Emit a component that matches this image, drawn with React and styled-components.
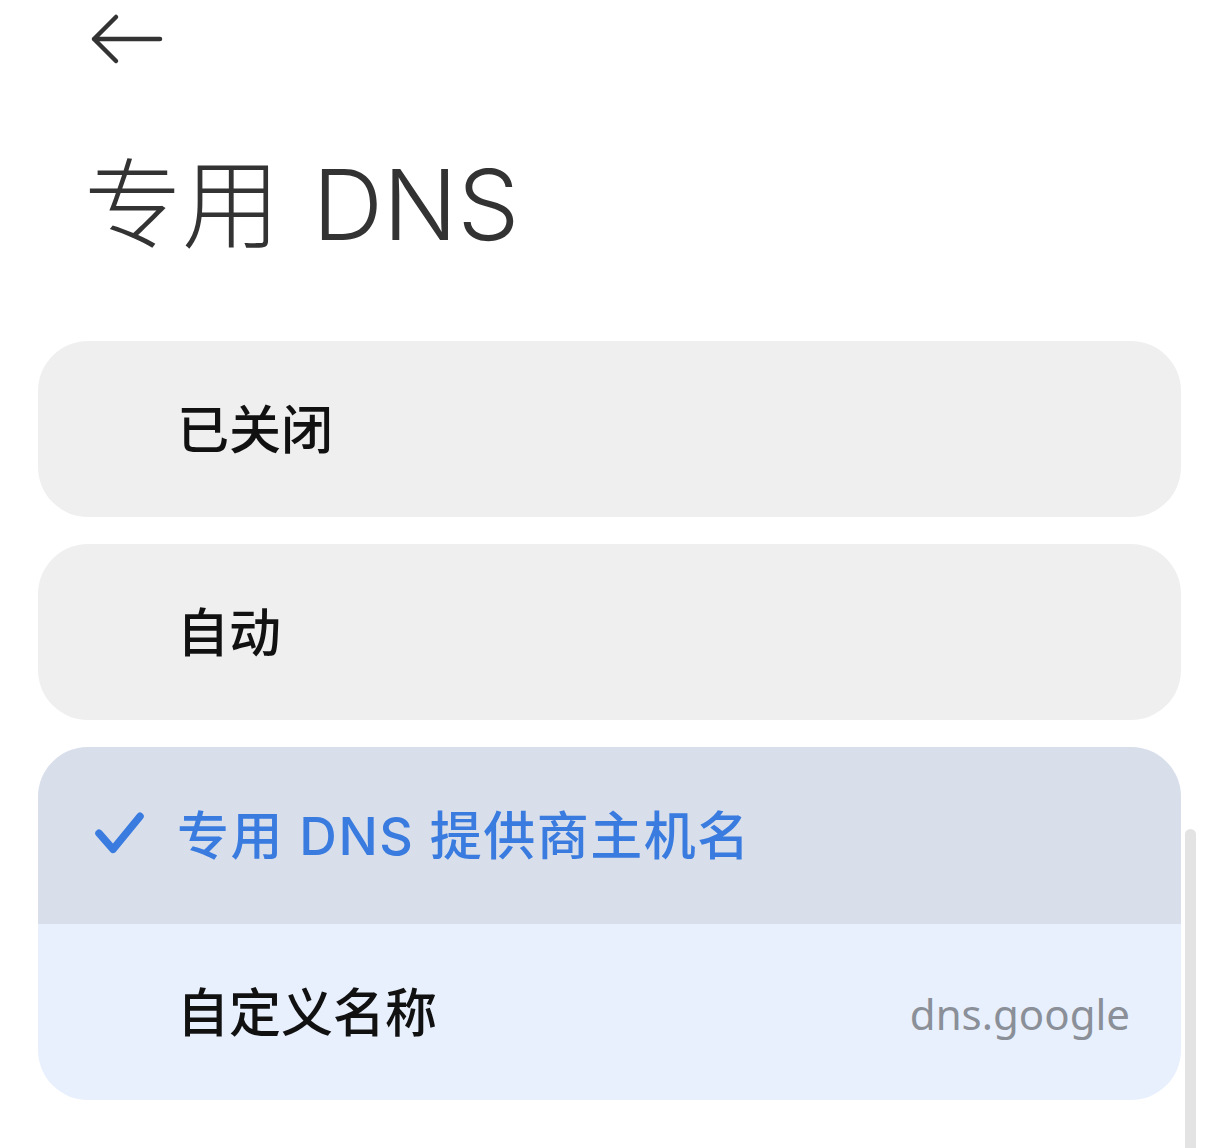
import React from "react";
import styled, { createGlobalStyle } from "styled-components";

const GlobalStyle = createGlobalStyle`
  html, body {
    margin: 0;
    padding: 0;
    background: #ffffff;
  }
  body {
    font-family: "Noto Sans", "Noto Sans CJK SC", sans-serif;
  }
`;

const Page = styled.div`
  position: relative;
  width: 1220px;
  height: 1148px;
  overflow: hidden;
  background: #ffffff;
`;

const Header = styled.div`
  padding: 12px 0 0 90px;
  height: 54px;
  display: flex;
  align-items: flex-start;
`;

const Title = styled.h1`
  margin: 0;
  padding: 90px 0 0 84px;
  height: 189px;
  box-sizing: border-box;
  font-family: Inter, "Noto Sans CJK SC", sans-serif;
  font-weight: 300;
  font-size: 98px;
  line-height: 1;
  color: #333333;
  white-space: nowrap;
  word-spacing: 5px;
`;

const List = styled.div`
  margin: 86px 39px 0 38px;
  display: flex;
  flex-direction: column;
  gap: 27px;
`;

const Card = styled.div`
  border-radius: 50px;
  overflow: hidden;
  background: ${(p) => p.$bg || "#efefef"};
`;

const Row = styled.div`
  height: ${(p) => p.$h || 176}px;
  box-sizing: border-box;
  display: flex;
  align-items: center;
  padding: 0 51px 6px 139px;
  background: ${(p) => p.$bg || "transparent"};
  position: relative;
`;

const Label = styled.span`
  font-family: ${(p) => (p.$latin ? "Inter, " : "")}"Noto Sans CJK SC", sans-serif;
  font-size: 52px;
  font-weight: 500;
  letter-spacing: ${(p) => (p.$latin ? "1.5px" : "0")};
  color: ${(p) => p.$color || "#111111"};
  white-space: nowrap;
`;

const Value = styled.span`
  margin-left: auto;
  margin-top: 8px;
  font-family: "Noto Sans", "Noto Sans CJK SC", sans-serif;
  font-size: 42px;
  color: #8a8f98;
`;

const Check = styled.svg`
  position: absolute;
  left: 56px;
  top: 50%;
  transform: translateY(-58%);
`;

const Scrollbar = styled.div`
  position: absolute;
  right: 24px;
  top: 829px;
  width: 11px;
  height: 340px;
  border-radius: 6px;
  background: #e3e3e3;
`;

const App = () => {
  return (
    <Page>
      <GlobalStyle />
      <Header>
        <svg width="74" height="54" viewBox="0 0 74 54">
          <path
            d="M4 27 H70 M26 5 L4 27 L26 49"
            fill="none"
            stroke="#333333"
            strokeWidth="4.5"
            strokeLinecap="round"
            strokeLinejoin="round"
          />
        </svg>
      </Header>
      <Title>专用 DNS</Title>
      <List>
        <Card>
          <Row>
            <Label>已关闭</Label>
          </Row>
        </Card>
        <Card>
          <Row>
            <Label>自动</Label>
          </Row>
        </Card>
        <Card $bg="#e8f0fd">
          <Row $h={177} $bg="#d9dfea">
            <Check width="52" height="46" viewBox="0 0 52 46">
              <path
                d="M5 24 L19 40 L46 7"
                fill="none"
                stroke="#3a7be0"
                strokeWidth="7.5"
                strokeLinecap="round"
                strokeLinejoin="round"
              />
            </Check>
            <Label $latin $color="#3a7be0">专用 DNS 提供商主机名</Label>
          </Row>
          <Row>
            <Label>自定义名称</Label>
            <Value>dns.google</Value>
          </Row>
        </Card>
      </List>
      <Scrollbar />
    </Page>
  );
};

export default App;
